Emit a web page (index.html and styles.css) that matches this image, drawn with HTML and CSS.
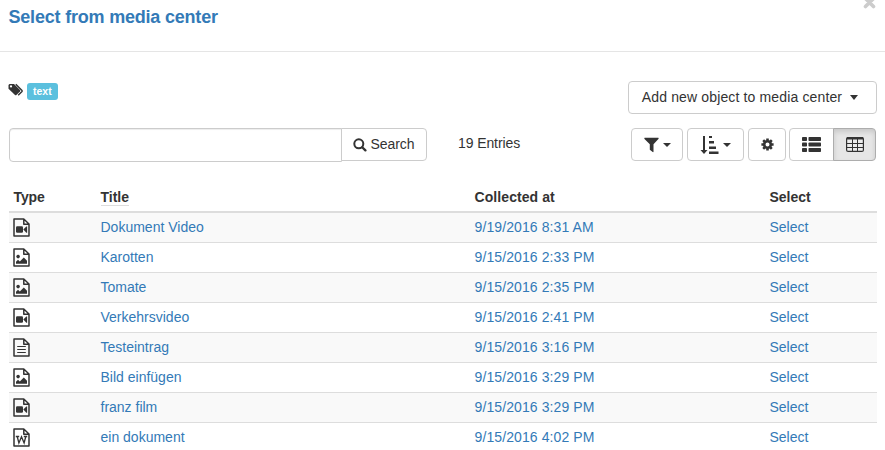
FILE: index.html
```
<!DOCTYPE html>
<html lang="en">
<head>
<meta charset="utf-8">
<title>Select from media center</title>
<link rel="stylesheet" href="styles.css">
</head>
<body>
<svg class="defs" aria-hidden="true">
  <symbol id="file" viewBox="0 0 17 19"><path d="M1 1h9.8L16 6v12H1z M10.8 1v5.2H16" fill="none" stroke="#333" stroke-width="1.5" stroke-linejoin="round"/></symbol>
  <symbol id="video" viewBox="0 0 17 19"><use href="#file"/><rect x="3" y="8.2" width="7" height="6.6" rx="1.2"/><path d="M10.3 11.5 13.3 8.4h.8v6.4h-.8z"/></symbol>
  <symbol id="image" viewBox="0 0 17 19"><use href="#file"/><circle cx="5.1" cy="8.6" r="1.8"/><path d="M3 15.8v-2.1l2-2 1.8 1.8 4-4 3.2 3.2v3.1z"/></symbol>
  <symbol id="text" viewBox="0 0 17 19"><use href="#file"/><path d="M4.2 8.5h8.6M4.2 11.5h8.6M4.2 14.5h8.6" stroke="#333" stroke-width="1.2"/></symbol>
  <symbol id="word" viewBox="0 0 17 19"><use href="#file"/><path d="M2.800 8.500h3.400M10.800 8.500h3.400M4.200 8.500l1.700 6.500L8.500 8.800l2.600 6.200 1.700-6.500" fill="none" stroke="#333" stroke-width="1.300"/></symbol>
</svg>
<header class="header">
  <h4 class="heading">Select from media center</h4>
  <svg class="close" width="13" height="13" viewBox="0 0 13 13"><path d="M2.5 2.5l8 8M10.5 2.5l-8 8" stroke="#ccc" stroke-width="3.6" stroke-linecap="round"/></svg>
</header>
<main class="body">
  <div class="top">
    <div class="tags">
      <svg width="16" height="14" viewBox="0 0 16 14"><path d="M.5 2 1.5 1H6l6 6q.6.700 0 1.400L8.400 12q-.7.600-1.400 0L.5 5.800z"/><circle cx="3" cy="3.400" r="1.150" fill="#fff"/><path d="M7.800 1.300 14 7.500q.4.500 0 1L10.200 12.300" fill="none" stroke="#333" stroke-width="1.400"/></svg>
      <span class="label">text</span>
    </div>
    <button class="btn add"><span class="add-text">Add new object to media center</span><i class="caret"></i></button>
  </div>
  <div class="toolbar">
    <div class="search">
      <input class="field" type="text" aria-label="Search">
      <button class="btn go"><svg width="14" height="14" viewBox="0 0 14 14"><circle cx="5.800" cy="5.800" r="4.500" fill="none" stroke="#333" stroke-width="2"/><path d="M9.200 9.200l3.200 3.200" stroke="#333" stroke-width="2.300" stroke-linecap="round"/></svg><span class="go-text">Search</span></button>
    </div>
    <span class="count">19 Entries</span>
    <div class="tools">
      <button class="btn filter" aria-label="Filter"><svg width="15" height="16" viewBox="0 0 15 16"><path d="M.6.8h13.800q.6.600 0 1.300L9.500 7.200v7.500q-.1.700-.8.400L5.800 12.700V7.200L.5 2.100Q0 1.200.6.800z"/></svg><i class="caret"></i></button>
      <button class="btn sort" aria-label="Sort"><svg width="20" height="20" viewBox="0 0 20 20"><path d="M3 1h2v14h2.500L4 19 .5 15H3zM9 1h3v2H9zM9 6h5v2.400H9zM9 11.500h7V14H9zM9 16.500h9.500V19H9z"/></svg><i class="caret"></i></button>
      <button class="btn gear" aria-label="Settings"><svg width="13" height="13" viewBox="0 0 13 13"><circle cx="6.500" cy="6.500" r="3.300" fill="none" stroke="#333" stroke-width="2.600"/><path d="M6.500.4v2.400M6.500 10.200v2.400M.4 6.500h2.400M10.200 6.500h2.400M2.200 2.200l1.600 1.600M9.200 9.200l1.600 1.600M10.800 2.200 9.200 3.800M3.800 9.200l-1.600 1.600" stroke="#333" stroke-width="2.600"/></svg></button>
      <div class="group">
        <button class="btn list" aria-label="List"><svg width="19" height="15" viewBox="0 0 19 15"><rect width="5" height="4" rx=".8"/><rect x="6.500" width="12.500" height="4" rx=".8"/><rect y="5.500" width="5" height="4" rx=".8"/><rect x="6.500" y="5.500" width="12.500" height="4" rx=".8"/><rect y="11" width="5" height="4" rx=".8"/><rect x="6.500" y="11" width="12.500" height="4" rx=".8"/></svg></button>
        <button class="btn grid" aria-label="Table"><svg width="18" height="15" viewBox="0 0 18 15"><rect x=".6" y=".6" width="16.800" height="13.800" rx="1.500" fill="#eee" stroke="#333" stroke-width="1.200"/><path d="M1 0h16l.5 2.500H.5z"/><path d="M1 6.500h16M1 10.500h16M6.500 2v12M11.500 2v12" stroke="#333" stroke-width="1"/></svg></button>
      </div>
    </div>
  </div>
  <table class="entries">
    <thead><tr><th class="c-type">Type</th><th class="c-title"><span class="sorted">Title</span></th><th class="c-date">Collected at</th><th>Select</th></tr></thead>
    <tbody>
      <tr><td><svg class="icon"><use href="#video"/></svg></td><td><a>Dokument Video</a></td><td class="date"><a>9/19/2016 8:31 AM</a></td><td><a>Select</a></td></tr>
      <tr><td><svg class="icon"><use href="#image"/></svg></td><td><a>Karotten</a></td><td class="date"><a>9/15/2016 2:33 PM</a></td><td><a>Select</a></td></tr>
      <tr><td><svg class="icon"><use href="#image"/></svg></td><td><a>Tomate</a></td><td class="date"><a>9/15/2016 2:35 PM</a></td><td><a>Select</a></td></tr>
      <tr><td><svg class="icon"><use href="#video"/></svg></td><td><a>Verkehrsvideo</a></td><td class="date"><a>9/15/2016 2:41 PM</a></td><td><a>Select</a></td></tr>
      <tr><td><svg class="icon"><use href="#text"/></svg></td><td><a>Testeintrag</a></td><td class="date"><a>9/15/2016 3:16 PM</a></td><td><a>Select</a></td></tr>
      <tr><td><svg class="icon"><use href="#image"/></svg></td><td><a>Bild einfügen</a></td><td class="date"><a>9/15/2016 3:29 PM</a></td><td><a>Select</a></td></tr>
      <tr><td><svg class="icon"><use href="#video"/></svg></td><td><a>franz film</a></td><td class="date"><a>9/15/2016 3:29 PM</a></td><td><a>Select</a></td></tr>
      <tr><td><svg class="icon"><use href="#word"/></svg></td><td><a>ein dokument</a></td><td class="date"><a>9/15/2016 4:02 PM</a></td><td><a>Select</a></td></tr>
    </tbody>
  </table>
</main>
</body>
</html>
```
FILE: styles.css
```
* { box-sizing: border-box; }
html { overflow: hidden; }
body { margin: 0; height: 450px; overflow: hidden; background: #fff; color: #333; font: 14px/20px "Liberation Sans", Arial, sans-serif; }
svg { fill: #333; flex: none; display: block; }
.defs { position: absolute; width: 0; height: 0; }
.header { height: 52px; padding: 7px 9px 0 8.5px; border-bottom: 1px solid #e5e5e5; display: flex; justify-content: space-between; }
.heading { margin: 0; font-size: 18px; font-weight: bold; line-height: 20px; color: #337ab7; letter-spacing: -.2px; }
.close { margin: -11px 0 0; }
.body { padding: 29px 8px 0 9px; }
.top { display: flex; justify-content: space-between; height: 47px; }
.tags { display: flex; gap: 3px; margin: 2px 0 0 -1px; }
.label { height: 17px; padding: 0 6px; border-radius: 3px; background: #5bc0de; color: #fff; font-size: 10.5px; font-weight: bold; line-height: 17px; width: 31px; }
.btn { display: flex; align-items: center; justify-content: center; height: 33px; padding: 0; border: 1px solid #ccc; border-radius: 4px; background: #fff; color: #333; font: inherit; }
.add { width: 249px; gap: 8px; padding-right: 5px; }
.add-text { letter-spacing: .14px; margin-top: -1px; }
.caret { border-top: 4px solid #333; border-left: 4px solid transparent; border-right: 4px solid transparent; }
.add .caret { border-top-width: 5px; border-left-width: 4.5px; border-right-width: 4.5px; }
.toolbar { display: flex; height: 54px; }
.search { display: flex; width: 418px; }
.field { width: 333px; height: 34px; border: 1px solid #ccc; border-radius: 4px 0 0 4px; box-shadow: inset 0 1px 1px rgba(0,0,0,.075); padding: 6px; }
.go { width: 86px; margin-left: -1px; border-radius: 0 4px 4px 0; gap: 3px; }
.go-text { margin-top: -1px; letter-spacing: -.05px; }
.count { margin: 5px 0 0 31px; letter-spacing: -.1px; }
.tools { margin-left: auto; margin-right: 1px; display: flex; gap: 4px; }
.filter { width: 52px; gap: 4px; }
.sort { width: 57px; gap: 3px; }
.gear { width: 38px; margin-right: -1px; }
.group { display: flex; }
.list { width: 45px; border-radius: 4px 0 0 4px; }
.grid { width: 43px; margin-left: -1px; border-radius: 0 4px 4px 0; background: #e6e6e6; border-color: #adadad; box-shadow: inset 0 3px 5px rgba(0,0,0,.125); }
.entries { width: 868px; table-layout: fixed; border-collapse: separate; border-spacing: 0; }
th, td { text-align: left; padding: 0 4.5px; vertical-align: top; }
th { height: 31px; padding-top: 5px; border-bottom: 2px solid #ddd; font-size: 14px; }
td { height: 30px; padding-top: 4px; border-bottom: 1px solid #ddd; }
tbody tr:nth-child(odd) { background: #f9f9f9; }
.c-type { width: 87px; letter-spacing: -.1px; }
.c-title { width: 374px; }
.c-date { width: 295px; letter-spacing: .08px; }
.date { letter-spacing: .1px; }
.sorted { display: inline-block; height: 19px; border-bottom: 1px solid #ddd; }
a { color: #337ab7; }
.icon { width: 17px; height: 19px; margin: 1px 0 0 -.5px; }
```
